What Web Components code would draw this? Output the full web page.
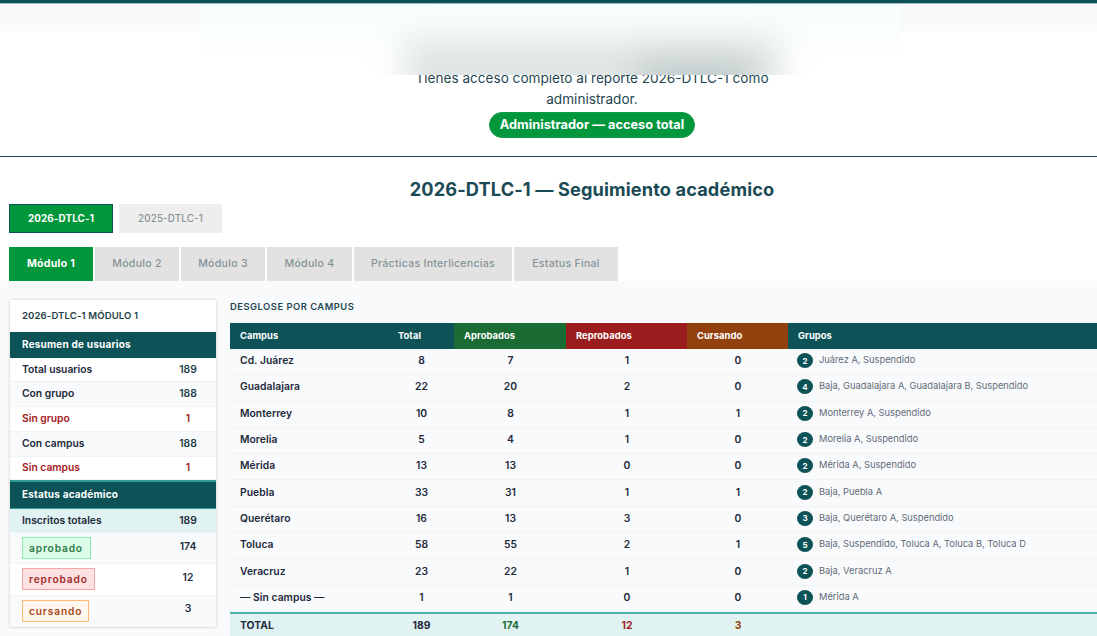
<!DOCTYPE html>
<html lang="es">
<head>
<meta charset="utf-8">
<title>Seguimiento académico</title>
<style>
  html, body { margin: 0; padding: 0; background: #fff; height: 636px; overflow: hidden; }
  body { font-family: Inter, "Liberation Sans", sans-serif; color: #1e293b; }
</style>
</head>
<body>
<report-page></report-page>

<script>
const TEAL = '#0d5257';

class ReportHero extends HTMLElement {
  connectedCallback() {
    this.attachShadow({ mode: 'open' });
    this.shadowRoot.innerHTML = `
      <style>
        :host { display: block; position: relative; height: 153px; border-top: 3px solid ${TEAL}; box-shadow: inset 0 1px 0 #9dbcc0; border-bottom: 1px solid #1a4a4f; box-sizing: content-box; }
        .strip { height: 27px; margin-top: 1px; background: #f8fafc; }
        .center { padding: 31px 0 0 87px; }
        .copy { margin: 0 auto; width: 380px; text-align: center; font-size: 13.6px; line-height: 21px; color: #1f4650; }
        .copy p { margin: 0; padding-top: 6px; }
        .badge { display: block; width: fit-content; box-sizing: border-box; height: 26px; margin: 2px auto 0; padding: 0 10px; border-radius: 13px; background: #02963d; border: 1px solid #0a9e46; color: #fff; font-weight: 700; font-size: 12.8px; line-height: 24px; white-space: nowrap; }
        /* the reference has a blurred patch over the top of the hero */
        .mask { position: absolute; left: 200px; top: 1px; width: 700px; height: 71px; overflow: hidden; background: linear-gradient(#f8fdfd, #fcfefe 38px, #fff 60px); }
        .blob { position: absolute; filter: blur(16px); }
        .b1 { left: 205px; top: 34px; width: 375px; height: 70px; background: #dfe5e4; }
        .b2 { left: 440px; top: 56px; width: 110px; height: 50px; background: #c2cccc; }
      </style>
      <div class="strip"></div>
      <div class="center">
        <div class="copy">
          <p>Tienes acceso completo al reporte 2026-DTLC-1 como administrador.</p>
          <span class="badge">Administrador — acceso total</span>
        </div>
      </div>
      <div class="mask"><div class="blob b1"></div><div class="blob b2"></div></div>
    `;
  }
}

class TabBar extends HTMLElement {
  connectedCallback() {
    const tabs = this.getAttribute('tabs').split('|');
    const kind = this.getAttribute('kind');
    this.attachShadow({ mode: 'open' });
    this.shadowRoot.innerHTML = `
      <style>
        :host { display: flex; padding-left: 9px; }
        .tab { box-sizing: border-box; display: flex; align-items: center; justify-content: center; padding-bottom: 1px; font-size: 10.6px; font-weight: 500; letter-spacing: .26px; white-space: nowrap; color: #869397; }
        :host([kind=year]) { gap: 6px; }
        :host([kind=year]) .tab { height: 29px; width: 103px; background: #eee; font-size: 9.8px; letter-spacing: .15px; }
        :host([kind=year]) .tab.on { width: 104px; background: #00963c; border: 1px solid ${TEAL}; color: #fff; font-weight: 700; }
        :host([kind=mod]) { gap: 2px; }
        :host([kind=mod]) .tab { height: 34px; background: #e2e2e2; }
        :host([kind=mod]) .tab.on { background: #00963c; color: #fff; font-weight: 700; }
      </style>
      ${tabs.map((t, i) => {
        const w = kind === 'mod' ? ` style="width:${[84, 84, 84, 85, 158, 104][i]}px"` : '';
        return `<div class="tab${i === 0 ? ' on' : ''}"${w}>${t}</div>`;
      }).join('')}
    `;
  }
}

class SummaryCard extends HTMLElement {
  connectedCallback() {
    this.attachShadow({ mode: 'open' });
    const row = (label, val, cls, h) => `<div class="row ${cls}" style="height:${h}px"><span>${label}</span><b>${val}</b></div>`;
    const pill = (label, val, cls, h, alt) => `<div class="row st ${alt}" style="height:${h}px"><span class="pill ${cls}">${label}</span><b>${val}</b></div>`;
    this.shadowRoot.innerHTML = `
      <style>
        :host { display: block; width: 206px; margin-left: 1px; flex: none; background: #fff; box-shadow: 0 0 3px rgba(0,0,0,.2); font-size: 10.3px; font-weight: 600; color: #1e293b; align-self: flex-start; }
        .title { height: 32px; display: flex; align-items: center; padding: 0 0 1px 12px; box-sizing: border-box; font-size: 9.6px; font-weight: 600; letter-spacing: .1px; color: #1f3f4a; }
        .head { background: ${TEAL}; color: #fff; font-weight: 700; display: flex; align-items: center; padding: 0 0 3px 12px; font-size: 10px; letter-spacing: .2px; box-sizing: border-box; }
        .head.sec { border-top: 2px solid #2f9c95; border-bottom: 1px solid #2f9c95; padding-bottom: 2px; }
        .row { box-sizing: border-box; display: flex; align-items: center; padding: 0 12px 2px; border-bottom: 1px solid #f1f4f6; }
        .row span { flex: 1; }
        .row b { width: 40px; text-align: center; margin-right: -4px; font-weight: 600; color: #1f3f4a; }
        .alt { background: #f8fafc; }
        .bad, .bad b { color: #a3201f; }
        .ins { background: #e0f2f1; }
        .ins b { color: #1e293b; }
        .st { padding-bottom: 0; }
        .st b { color: #1e293b; margin-top: -5px; }
        .st span { flex: none; margin-right: auto; }
        .pill { box-sizing: border-box; height: 22px; display: flex; align-items: center; padding: 0 6px; border: 1px solid; font-size: 10.2px; font-weight: 600; letter-spacing: .85px; }
        .ok { background: #dcfce7; border-color: #86efac; color: #2c7a47; width: 69px; }
        .ko { background: #fee2e2; border-color: #f5a5a5; color: #a32a2a; width: 73px; }
        .on { background: #fff7ed; border-color: #fdba74; color: #a8471a; width: 67px; }
      </style>
      <div class="title">2026-DTLC-1 MÓDULO 1</div>
      <div class="head" style="height:26px">Resumen de usuarios</div>
      ${row('Total usuarios', 189, '', 24)}
      ${row('Con grupo', 188, 'alt', 25)}
      ${row('Sin grupo', 1, 'bad', 25)}
      ${row('Con campus', 188, 'alt', 25)}
      ${row('Sin campus', 1, 'bad', 23)}
      <div class="head sec" style="height:29px">Estatus académico</div>
      ${row('Inscritos totales', 189, 'ins', 24)}
      ${pill('aprobado', 174, 'ok', 31, 'alt')}
      ${pill('reprobado', 12, 'ko', 31.5, '')}
      ${pill('cursando', 3, 'on', 31.5, 'alt')}
    `;
  }
}

const CAMPUS = [
  ['Cd. Juárez', 8, 7, 1, 0, 2, 'Juárez A, Suspendido'],
  ['Guadalajara', 22, 20, 2, 0, 4, 'Baja, Guadalajara A, Guadalajara B, Suspendido'],
  ['Monterrey', 10, 8, 1, 1, 2, 'Monterrey A, Suspendido'],
  ['Morelia', 5, 4, 1, 0, 2, 'Morelia A, Suspendido'],
  ['Mérida', 13, 13, 0, 0, 2, 'Mérida A, Suspendido'],
  ['Puebla', 33, 31, 1, 1, 2, 'Baja, Puebla A'],
  ['Querétaro', 16, 13, 3, 0, 3, 'Baja, Querétaro A, Suspendido'],
  ['Toluca', 58, 55, 2, 1, 5, 'Baja, Suspendido, Toluca A, Toluca B, Toluca D'],
  ['Veracruz', 23, 22, 1, 0, 2, 'Baja, Veracruz A'],
  ['— Sin campus —', 1, 1, 0, 0, 1, 'Mérida A'],
];

class CampusTable extends HTMLElement {
  connectedCallback() {
    this.attachShadow({ mode: 'open' });
    this.shadowRoot.innerHTML = `
      <style>
        :host { display: block; flex: 1; min-width: 0; font-size: 10.3px; letter-spacing: .05px; color: #1e293b; }
        h3 { margin: 0; height: 23px; padding-top: 1px; box-sizing: border-box; font-size: 9.4px; line-height: 12px; font-weight: 600; letter-spacing: .5px; color: #1f4650; }
        .grid { display: grid; grid-template-columns: 158px 66px 112px 121px 101px 1fr; }
        .grid > div { display: flex; align-items: center; justify-content: center; box-sizing: border-box; }
        .grid > .th { height: 26px; background: ${TEAL}; color: #fff; font-weight: 700; font-size: 9.4px; justify-content: flex-start; padding: 0 0 2px 10px; }
        .grid > .th.g { background: #1b6b35; }
        .grid > .th.r { background: #9b1c1c; }
        .grid > .th.c { background: #92400e; }
        .grid > .td { height: 26.3px; border-bottom: 1px solid #eff2f5; font-weight: 600; padding: 0 0 3px 1px; }
        .grid > .td.name { justify-content: flex-start; padding-left: 10px; }
        .grid > .td.groups { justify-content: flex-start; padding: 0 0 2px 9px; gap: 6px; font-weight: 400; color: #626b78; font-size: 9.3px; letter-spacing: 0; }
        .groups span:last-child { margin-top: -2px; }
        .count { width: 16px; height: 15px; border-radius: 50%; background: ${TEAL}; color: #fff; font-size: 8px; font-weight: 700; display: flex; align-items: center; justify-content: center; flex: none; letter-spacing: 0; }
        .grid > .tot { height: 25px; background: #e0f2f1; border-top: 2px solid #4fb3a9; font-weight: 700; padding: 0 0 1px 1px; }
        .grid > .tot.name { justify-content: flex-start; padding-left: 10px; }
      </style>
      <h3>DESGLOSE POR CAMPUS</h3>
      <div class="grid">
        <div class="th">Campus</div><div class="th">Total</div><div class="th g">Aprobados</div><div class="th r">Reprobados</div><div class="th c">Cursando</div><div class="th">Grupos</div>
        ${CAMPUS.map(c => `
          <div class="td name">${c[0]}</div><div class="td">${c[1]}</div><div class="td">${c[2]}</div><div class="td">${c[3]}</div><div class="td">${c[4]}</div>
          <div class="td groups"><span class="count">${c[5]}</span><span>${c[6]}</span></div>`).join('')}
        <div class="tot name">TOTAL</div><div class="tot">189</div><div class="tot" style="color:#1b6b35">174</div><div class="tot" style="color:#9b1c1c">12</div><div class="tot" style="color:#92400e">3</div><div class="tot"></div>
      </div>
    `;
  }
}

class ReportPage extends HTMLElement {
  connectedCallback() {
    this.attachShadow({ mode: 'open' });
    this.shadowRoot.innerHTML = `
      <style>
        :host { display: block; height: 636px; overflow: hidden; }
        h1 { margin: 0; padding: 20px 0 0 87px; height: 27px; text-align: center; font-size: 18.2px; line-height: 24px; font-weight: 700; color: #1a4a55; letter-spacing: .12px; }
        .mods { margin-top: 14px; }
        .panel { display: flex; gap: 14px; height: 355px; padding: 19px 0 0 9px; box-sizing: border-box; background: #f8fafc; }
      </style>
      <report-hero></report-hero>
      <h1>2026-DTLC-1 — Seguimiento académico</h1>
      <tab-bar class="years" kind="year" tabs="2026-DTLC-1|2025-DTLC-1"></tab-bar>
      <tab-bar class="mods" kind="mod" tabs="Módulo 1|Módulo 2|Módulo 3|Módulo 4|Prácticas Interlicencias|Estatus Final"></tab-bar>
      <div class="panel">
        <summary-card></summary-card>
        <campus-table></campus-table>
      </div>
    `;
  }
}

customElements.define('report-hero', ReportHero);
customElements.define('tab-bar', TabBar);
customElements.define('summary-card', SummaryCard);
customElements.define('campus-table', CampusTable);
customElements.define('report-page', ReportPage);
</script>
</body>
</html>
